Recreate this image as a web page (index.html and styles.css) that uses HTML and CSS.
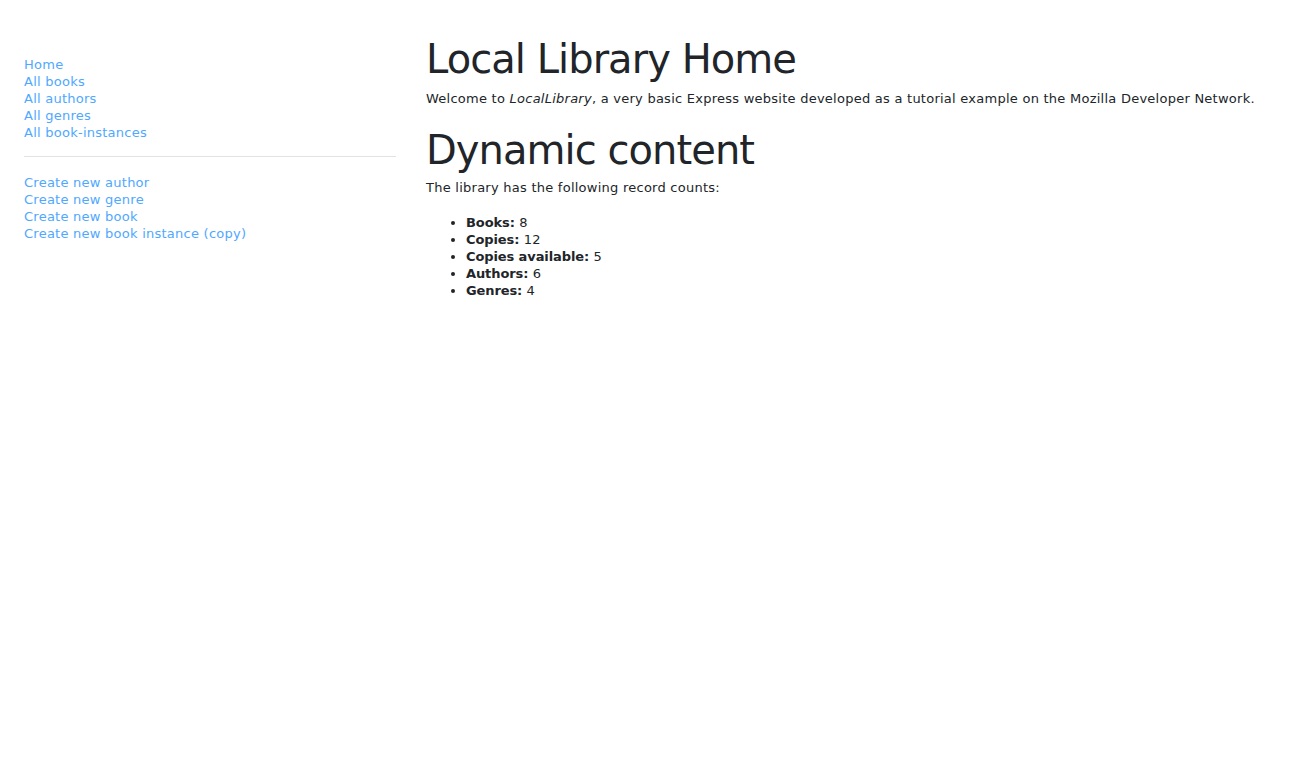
FILE: index.html
```html
<!DOCTYPE html>
<html lang="en">
<head>
<meta charset="utf-8">
<title>Local Library</title>
<link rel="stylesheet" href="styles.css">
</head>
<body>
<div class="page">
  <aside class="sidebar">
    <ul class="nav-list">
      <li><a href="#">Home</a></li>
      <li><a href="#">All books</a></li>
      <li><a href="#">All authors</a></li>
      <li><a href="#">All genres</a></li>
      <li><a href="#">All book-instances</a></li>
    </ul>
    <hr class="divider">
    <ul class="nav-list">
      <li><a href="#">Create new author</a></li>
      <li><a href="#">Create new genre</a></li>
      <li><a href="#">Create new book</a></li>
      <li><a href="#">Create new book instance (copy)</a></li>
    </ul>
  </aside>
  <main class="content">
    <h1 class="title title-first">Local Library Home</h1>
    <p class="intro">Welcome to <em>LocalLibrary</em>, a very basic Express website developed as a tutorial example on the Mozilla Developer Network.</p>
    <h1 class="title title-second">Dynamic content</h1>
    <p class="lead-in">The library has the following record counts:</p>
    <ul class="counts">
      <li><strong>Books:</strong> 8</li>
      <li><strong>Copies:</strong> 12</li>
      <li><strong>Copies available:</strong> 5</li>
      <li><strong>Authors:</strong> 6</li>
      <li><strong>Genres:</strong> 4</li>
    </ul>
  </main>
</div>
</body>
</html>
```

FILE: styles.css
```css
html, body {
  margin: 0;
  padding: 0;
  background: #ffffff;
}

body {
  font-family: "DejaVu Sans", "Liberation Sans", sans-serif;
  font-size: 13px;
  line-height: 17px;
  letter-spacing: 0.25px;
  color: #212529;
}

.page {
  display: flex;
  align-items: flex-start;
}

.sidebar {
  width: 372px;
  padding: 56px 0 0 24px;
  flex: none;
}

.nav-list {
  list-style: none;
  margin: 0;
  padding: 0;
}

.nav-list a {
  color: #4fa8ff;
  text-decoration: none;
}

.divider {
  border: 0;
  border-top: 1px solid #e2e2e2;
  margin: 15px 0 17px;
  height: 0;
}

.content {
  padding: 37px 0 0 30px;
  flex: 1;
}

.title {
  font-size: 40px;
  line-height: 44px;
  letter-spacing: -0.95px;
  font-weight: normal;
  margin: 0;
  color: #212529;
}

.title-first {
  margin-bottom: 9px;
}

.intro {
  margin: 0 0 21px;
}

.title-second {
  margin-bottom: 7px;
}

.lead-in {
  margin: 0 0 18px;
}

.counts {
  margin: 0;
  padding-left: 40px;
}

.counts strong {
  font-weight: bold;
  letter-spacing: -0.1px;
}
```
